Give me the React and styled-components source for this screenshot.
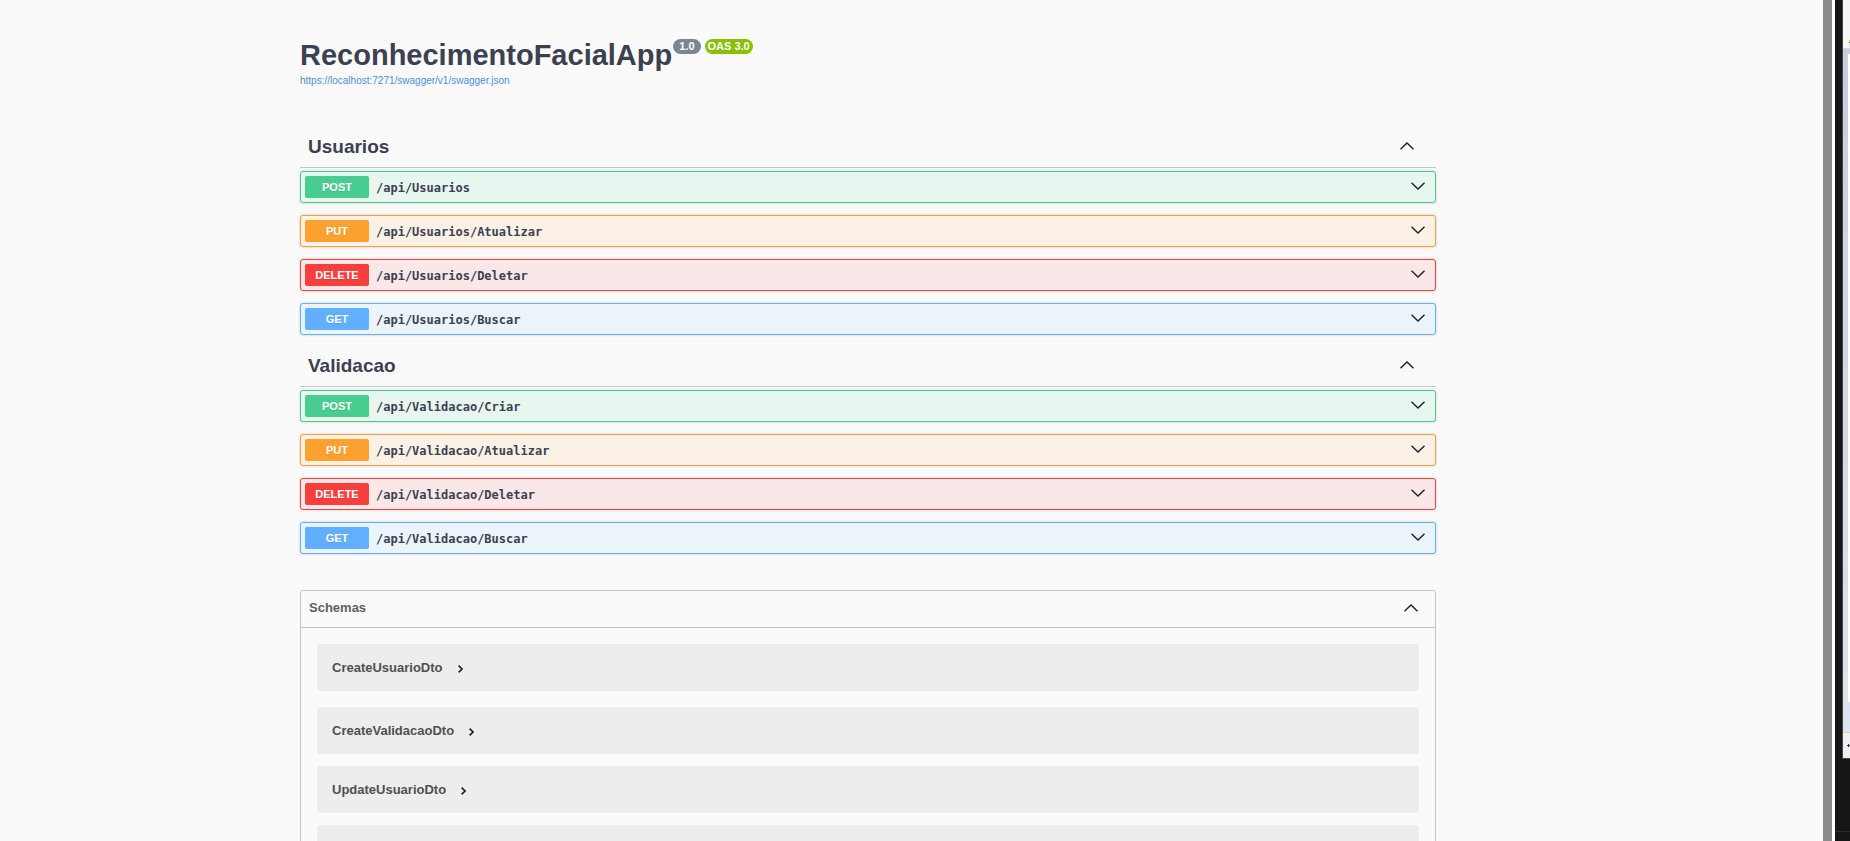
import React from "react";
import styled, { createGlobalStyle } from "styled-components";

const GlobalStyle = createGlobalStyle`
  * { box-sizing: border-box; }
  html { background: #fafafa; overflow: hidden; }
  body { margin: 0; height: 100vh; overflow: hidden; color: #3b4151; font-family: "Liberation Sans", Arial, sans-serif; }
  h1, h2, p { margin: 0; }
  button { font: inherit; color: inherit; background: none; border: 0; padding: 0; margin: 0; text-align: left; cursor: pointer; }
`;

const Screen = styled.div`
  display: flex;
  height: 100vh;
`;

const Page = styled.main`
  flex: 1;
  min-width: 0;
  overflow: hidden;
  padding: 36px 387px 0 300px;
  background: #fafafa;
`;

const Info = styled.header`
  display: flex;
  flex-direction: column;
  align-items: flex-start;
  margin-bottom: 36px;
`;

const TitleRow = styled.div`
  display: flex;
  align-items: flex-start;
  gap: 1px;
`;

const Title = styled.h1`
  font-size: 29px;
  line-height: 38px;
  font-weight: 700;
`;

const Badges = styled.div`
  display: flex;
  gap: 4px;
  padding-top: 3px;
`;

const Badge = styled.span`
  padding: 0 ${(p) => (p.$green ? 3 : 6)}px;
  border-radius: 8px;
  background: ${(p) => (p.$green ? "#89bf04" : "#7d8492")};
  color: #fff;
  font-size: 11px;
  line-height: 15px;
  font-weight: 700;
  white-space: nowrap;
`;

const SpecLink = styled.a`
  color: #4990e2;
  font-size: 10px;
  line-height: 14px;
  text-decoration: none;
`;

const TagHeader = styled.button`
  display: flex;
  align-items: center;
  justify-content: space-between;
  width: 100%;
  height: 44px;
  padding: 0 22px 0 8px;
  border-bottom: 1px solid #c3c4c8;
`;

const TagName = styled.span`
  padding-top: 2px;
  font-size: 19px;
  line-height: 24px;
  font-weight: 700;
`;

const TagSection = styled.section`
  margin-bottom: 8px;
`;

const Operations = styled.div`
  display: flex;
  flex-direction: column;
  gap: 12px;
  margin-top: 3px;
`;

const tones = {
  POST: ["#49cc90", "#e8f6f0"],
  PUT: ["#fca130", "#fbf1e6"],
  DELETE: ["#f93e3e", "#fae7e7"],
  GET: ["#61affe", "#ebf3fb"],
};

const Operation = styled.button`
  display: flex;
  align-items: center;
  gap: 7px;
  width: 100%;
  height: 32px;
  padding: 4px 10px 4px 4px;
  border: 1px solid ${(p) => tones[p.$method][0]};
  border-radius: 3px;
  background: ${(p) => tones[p.$method][1]};
  box-shadow: 0 0 3px rgba(0, 0, 0, 0.19);

  svg { margin-bottom: 2px; }
`;

const Method = styled.span`
  width: 64px;
  border-radius: 2px;
  background: ${(p) => tones[p.$method][0]};
  color: #fff;
  font-size: 11px;
  line-height: 22px;
  font-weight: 700;
  text-align: center;
  text-shadow: 0 1px 0 rgba(0, 0, 0, 0.1);
`;

const Path = styled.span`
  flex: 1;
  padding-top: 2px;
  font-family: "DejaVu Sans Mono", monospace;
  font-size: 12px;
  line-height: 16px;
  font-weight: 700;
`;

const Models = styled.section`
  margin-top: 36px;
  border: 1px solid #c3c4c8;
  border-radius: 3px;
`;

const ModelsHeader = styled.button`
  display: flex;
  align-items: center;
  justify-content: space-between;
  width: 100%;
  height: 37px;
  padding: 0 17px 3px 8px;
  border-bottom: 1px solid #c3c4c8;
  color: #606060;
  font-size: 13px;
  line-height: 16px;
  font-weight: 700;
`;

const ModelList = styled.div`
  display: flex;
  flex-direction: column;
  gap: 12px;
  padding: 16px;
`;

const Model = styled.button`
  display: flex;
  align-items: center;
  gap: 15px;
  flex: none;
  height: 47px;
  padding: 0 15px;
  border-radius: 3px;
  background: #ededed;
  color: #505050;
  font-size: 13px;
  line-height: 16px;
  font-weight: 700;

  &:first-child { margin-bottom: 4px; }
`;

const Icon = styled.svg`
  display: block;
  flex: none;
  fill: none;
  stroke: #202020;
`;

const Desktop = styled.aside`
  display: flex;
  flex: none;
  width: 27px;
  background: #161616;
`;

const Scrollbar = styled.div`
  width: 12px;
  border-right: 3px solid #fff;
  background: #8b8b8b;
`;

const Backdrop = styled.div`
  display: flex;
  flex: 1;
  flex-direction: column;
  justify-content: space-between;
`;

const Taskbar = styled.div`
  height: 10px;
  border-top: 1px solid #2b2b2b;
`;

const BackWindow = styled.div`
  display: flex;
  flex-direction: column;
  height: 759px;
  margin-left: 7px;
  border: solid #444;
  border-width: 0 0 1px 1px;
`;

const WindowTop = styled.div`
  display: flex;
  align-items: flex-end;
  justify-content: flex-end;
  height: 49px;
  padding-bottom: 5px;
  border-bottom: 1px solid #d5d5d5;
  background: #f5f6f8;
`;

const WindowBody = styled.div`
  flex: 1;
  padding: 5px 0 30px 5px;
  background: linear-gradient(#c5cde0, #dbe4f1);
`;

const WindowSheet = styled.div`
  height: 100%;
  background: #fff;
`;

const WindowFooter = styled.div`
  display: flex;
  align-items: center;
  justify-content: flex-end;
  height: 26px;
  border-top: 1px solid #d0d0d0;
  background: #f1f0f0;
`;

function Chevron({ up }) {
  return (
    <Icon width="14" height="8" viewBox="0 0 14 8" strokeWidth="1.4" aria-hidden="true">
      <path d={up ? "M.5 7.2 7 1 13.5 7.2" : "M.5.8 7 7 13.5.8"} />
    </Icon>
  );
}

function SmallChevron() {
  return (
    <Icon width="5" height="10" viewBox="0 0 5 10" strokeWidth="1.6" aria-hidden="true">
      <path d="M.6 2.6 4 6 .6 9.4" />
    </Icon>
  );
}

const tags = [
  {
    name: "Usuarios",
    operations: [
      ["POST", "/api/Usuarios"],
      ["PUT", "/api/Usuarios/Atualizar"],
      ["DELETE", "/api/Usuarios/Deletar"],
      ["GET", "/api/Usuarios/Buscar"],
    ],
  },
  {
    name: "Validacao",
    operations: [
      ["POST", "/api/Validacao/Criar"],
      ["PUT", "/api/Validacao/Atualizar"],
      ["DELETE", "/api/Validacao/Deletar"],
      ["GET", "/api/Validacao/Buscar"],
    ],
  },
];

const models = ["CreateUsuarioDto", "CreateValidacaoDto", "UpdateUsuarioDto"];

export default function App() {
  return (
    <>
      <GlobalStyle />
      <Screen>
        <Page>
          <Info>
            <TitleRow>
              <Title>ReconhecimentoFacialApp</Title>
              <Badges>
                <Badge>1.0</Badge>
                <Badge $green>OAS 3.0</Badge>
              </Badges>
            </TitleRow>
            <SpecLink href="#swagger">https://localhost:7271/swagger/v1/swagger.json</SpecLink>
          </Info>
          {tags.map((tag) => (
            <TagSection key={tag.name}>
              <TagHeader aria-expanded="true">
                <TagName>{tag.name}</TagName>
                <Chevron up />
              </TagHeader>
              <Operations>
                {tag.operations.map(([method, path]) => (
                  <Operation key={path} $method={method} aria-expanded="false">
                    <Method $method={method}>{method}</Method>
                    <Path>{path}</Path>
                    <Chevron />
                  </Operation>
                ))}
              </Operations>
            </TagSection>
          ))}
          <Models>
            <ModelsHeader aria-expanded="true">
              <span>Schemas</span>
              <Chevron up />
            </ModelsHeader>
            <ModelList>
              {models.map((name) => (
                <Model key={name} aria-expanded="false">
                  <span>{name}</span>
                  <SmallChevron />
                </Model>
              ))}
              <Model aria-label="Schema" />
            </ModelList>
          </Models>
        </Page>
        <Desktop>
          <Scrollbar />
          <Backdrop>
            <BackWindow>
              <WindowTop>
                <Icon width="1" height="3" viewBox="0 0 1 3" aria-hidden="true">
                  <path d="M.5 0v2" stroke="#f0c040" />
                  <path d="M.5 2v1" stroke="#6b5a3a" />
                </Icon>
              </WindowTop>
              <WindowBody>
                <WindowSheet />
              </WindowBody>
              <WindowFooter>
                <Icon width="3" height="3" viewBox="0 0 3 3" aria-hidden="true">
                  <path d="M0 1.5h3M1.5 0v3" stroke="#1f3864" />
                </Icon>
              </WindowFooter>
            </BackWindow>
            <Taskbar />
          </Backdrop>
        </Desktop>
      </Screen>
    </>
  );
}
